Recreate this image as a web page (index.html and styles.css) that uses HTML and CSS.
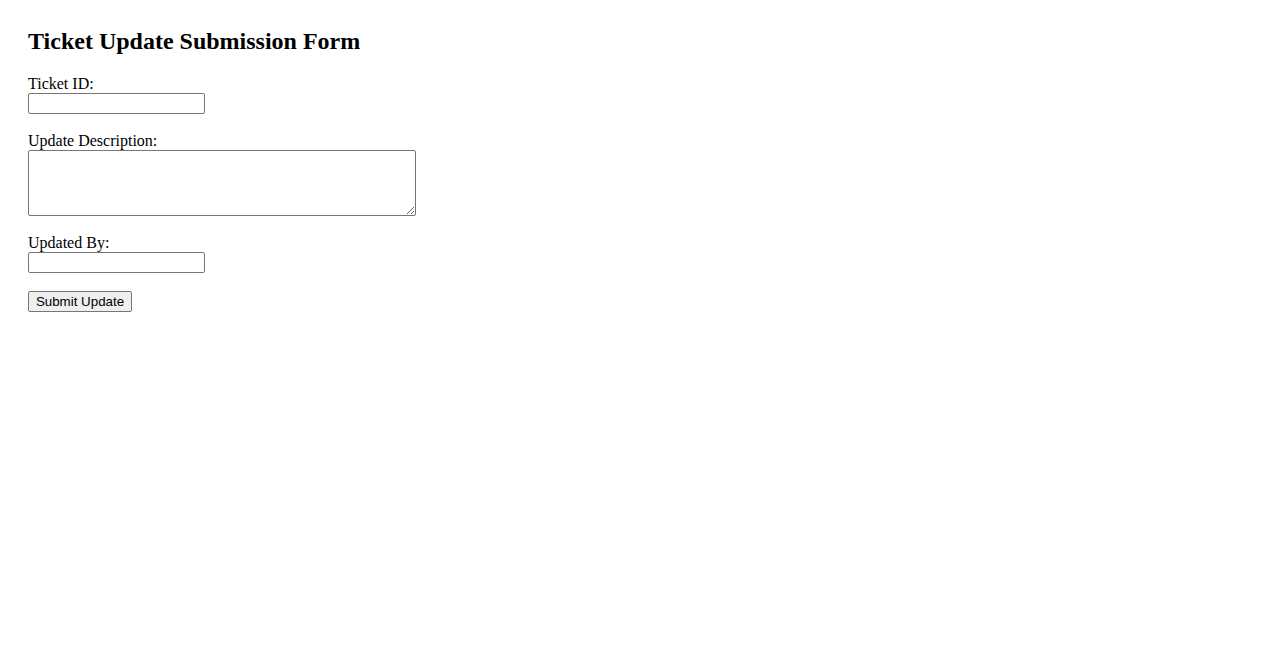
FILE: index.html
```html
<!DOCTYPE html>
<html>
<head>
<meta charset="utf-8">
<title>Ticket Update Submission Form</title>
<link rel="stylesheet" href="styles.css">
</head>
<body>
<div class="page">
  <h2 class="title">Ticket Update Submission Form</h2>
  <form class="form">
    <div class="group">
      <label for="ticketId">Ticket ID:</label>
      <input type="text" id="ticketId" class="field">
    </div>
    <div class="group">
      <label for="desc">Update Description:</label>
      <textarea id="desc" class="area" rows="4"></textarea>
    </div>
    <div class="group">
      <label for="by">Updated By:</label>
      <input type="text" id="by" class="field">
    </div>
    <button type="submit" class="btn">Submit Update</button>
  </form>
</div>
</body>
</html>
```

FILE: styles.css
```css
body {
  margin: 8px;
  font-family: "Liberation Serif", "Times New Roman", serif;
  font-size: 16px;
  color: #000;
  background: #fff;
}
.page {
  padding: 20px;
}
.title {
  font-size: 24px;
  font-weight: bold;
  margin: 0 0 20px 0;
}
.group {
  margin-bottom: 18px;
}
.group label {
  display: block;
}
.field {
  display: block;
  font-family: "Liberation Sans", Arial, sans-serif;
  font-size: 13.33px;
  width: 177px;
  height: 21px;
  box-sizing: border-box;
  border: 1px solid #767676;
  border-radius: 2px;
  padding: 1px 2px;
  margin: 0;
}
.area {
  display: block;
  font-family: "Liberation Mono", monospace;
  font-size: 13.33px;
  width: 388px;
  height: 66px;
  box-sizing: border-box;
  border: 1px solid #767676;
  border-radius: 2px;
  padding: 2px;
  margin: 0;
}
.btn {
  display: block;
  font-family: "Liberation Sans", Arial, sans-serif;
  font-size: 13.33px;
  width: 104px;
  height: 21px;
  padding: 1px 6px;
  border: 1px solid #767676;
  border-radius: 2px;
  background: #efefef;
  color: #000;
  margin: 0;
}
```
